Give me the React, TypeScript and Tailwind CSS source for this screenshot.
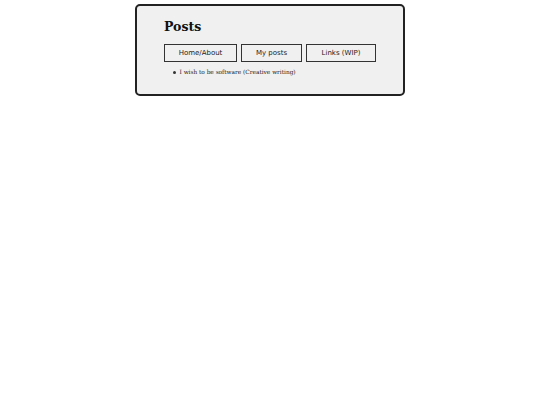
export default function App() {
  const buttons = [
    { t: "Home/About", w: "w-[73px]" },
    { t: "My posts", w: "w-[61px]" },
    { t: "Links (WIP)", w: "w-[70px]" },
  ];
  return (
    <div className="min-h-[405px] w-full bg-white pt-[4px]">
      <div className="mx-auto h-[92px] w-[270px] rounded-[5px] border-2 border-[#222] bg-[#f0f0f0] pl-[27px] pt-[13px]">
        <h1
          className="m-0 text-[12.5px] font-bold leading-[16px] text-[#111]"
          style={{ fontFamily: '"DejaVu Serif", serif' }}
        >
          Posts
        </h1>
        <div className="mt-[9px] flex gap-[4px]" style={{ fontFamily: '"DejaVu Sans", sans-serif' }}>
          {buttons.map((b) => (
            <button
              key={b.t}
              className={`h-[18px] border border-[#333] bg-[#f0f0f0] p-0 text-center text-[7px] leading-[8px] text-[#222] ${b.w}`}
            >
              {b.t}
            </button>
          ))}
        </div>
        <ul
          className="mt-[5px] list-none pl-[9px] text-[5.8px] leading-[11px] text-[#222]"
          style={{ fontFamily: '"DejaVu Serif", serif' }}
        >
          <li className="flex items-center">
            <span className="mr-[4px] inline-block h-[2.5px] w-[2.5px] rounded-full bg-[#333]" />
            <span>I wish to be software (Creative writing)</span>
          </li>
        </ul>
      </div>
    </div>
  );
}
